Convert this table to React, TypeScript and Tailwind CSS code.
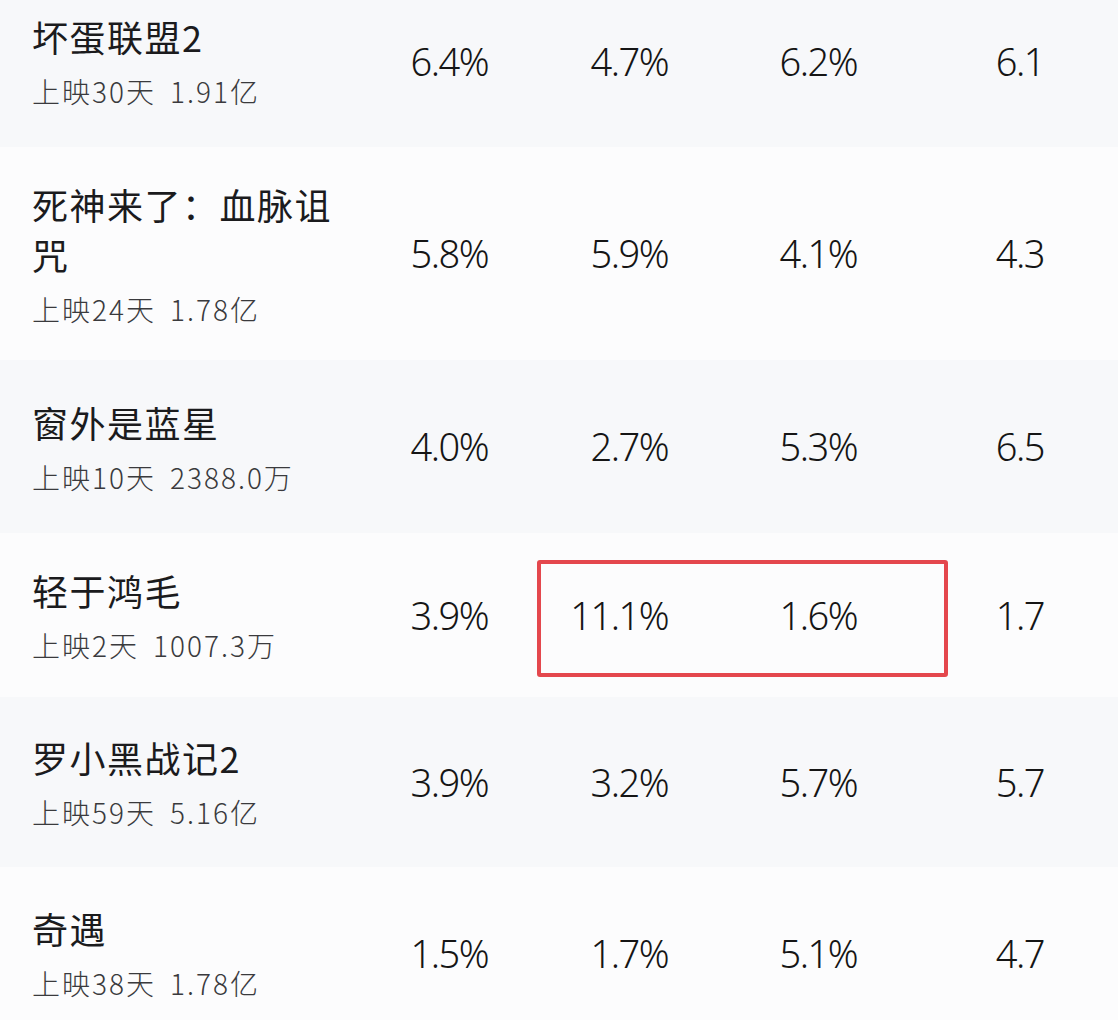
import React from 'react';

interface Movie {
  name: string;
  days: string;
  gross: string;
  a: string;
  b: string;
  c: string;
  d: string;
  height: string;
  highlight?: boolean;
}

const movies: Movie[] = [
  { name: '坏蛋联盟2', days: '上映30天', gross: '1.91亿', a: '6.4%', b: '4.7%', c: '6.2%', d: '6.1', height: 'h-[172px]' },
  { name: '死神来了：血脉诅咒', days: '上映24天', gross: '1.78亿', a: '5.8%', b: '5.9%', c: '4.1%', d: '4.3', height: 'h-[213px]' },
  { name: '窗外是蓝星', days: '上映10天', gross: '2388.0万', a: '4.0%', b: '2.7%', c: '5.3%', d: '6.5', height: 'h-[173px]' },
  { name: '轻于鸿毛', days: '上映2天', gross: '1007.3万', a: '3.9%', b: '11.1%', c: '1.6%', d: '1.7', height: 'h-[164px]', highlight: true },
  { name: '罗小黑战记2', days: '上映59天', gross: '5.16亿', a: '3.9%', b: '3.2%', c: '5.7%', d: '5.7', height: 'h-[170px]' },
  { name: '奇遇', days: '上映38天', gross: '1.78亿', a: '1.5%', b: '1.7%', c: '5.1%', d: '4.7', height: 'h-[172px]' },
];

const cjk = { fontFamily: '"Noto Sans CJK SC", "Noto Sans", sans-serif' };
const num = { fontFamily: '"Noto Sans", "Liberation Sans", sans-serif' };

const NumCell: React.FC<{ value: string; className: string }> = ({ value, className }) => (
  <div className={`flex items-center justify-end text-[38px] font-light text-[#151515] tracking-[-1.5px] ${className}`} style={num}>
    {value}
  </div>
);

const App: React.FC = () => {
  return (
    <div className="w-[1118px] h-[1020px] overflow-hidden bg-[#fbfcfd]">
      <div className="-mt-[25px] flex flex-col">
        {movies.map((m, i) => (
          <div
            key={m.name}
            className={`relative flex ${m.height} ${i % 2 === 0 ? 'bg-[#f7f8fa]' : 'bg-[#fcfcfd]'}`}
          >
            <div className="w-[345px] flex flex-col justify-center pl-[32px] pr-[10px]" style={cjk}>
              <div className="text-[36px] leading-[50px] text-[#1b1b1d] tracking-[1.5px]">{m.name}</div>
              <div className="mt-[10px] text-[28px] leading-[40px] font-light text-[#3a3a3d] tracking-[2px]">
                {m.days}
                <span className="ml-[14px]">{m.gross}</span>
              </div>
            </div>
            <NumCell value={m.a} className="w-[165px] pr-[22px]" />
            <NumCell value={m.b} className="w-[180px] pr-[22px]" />
            <NumCell value={m.c} className="w-[189px] pr-[22px]" />
            <NumCell value={m.d} className="w-[239px] pr-[74px]" />
            {m.highlight && (
              <div className="absolute left-[537px] top-[27px] w-[411px] h-[117px] border-[4px] border-[#e4474d] rounded-[3px]" />
            )}
          </div>
        ))}
      </div>
    </div>
  );
};

export default App;
